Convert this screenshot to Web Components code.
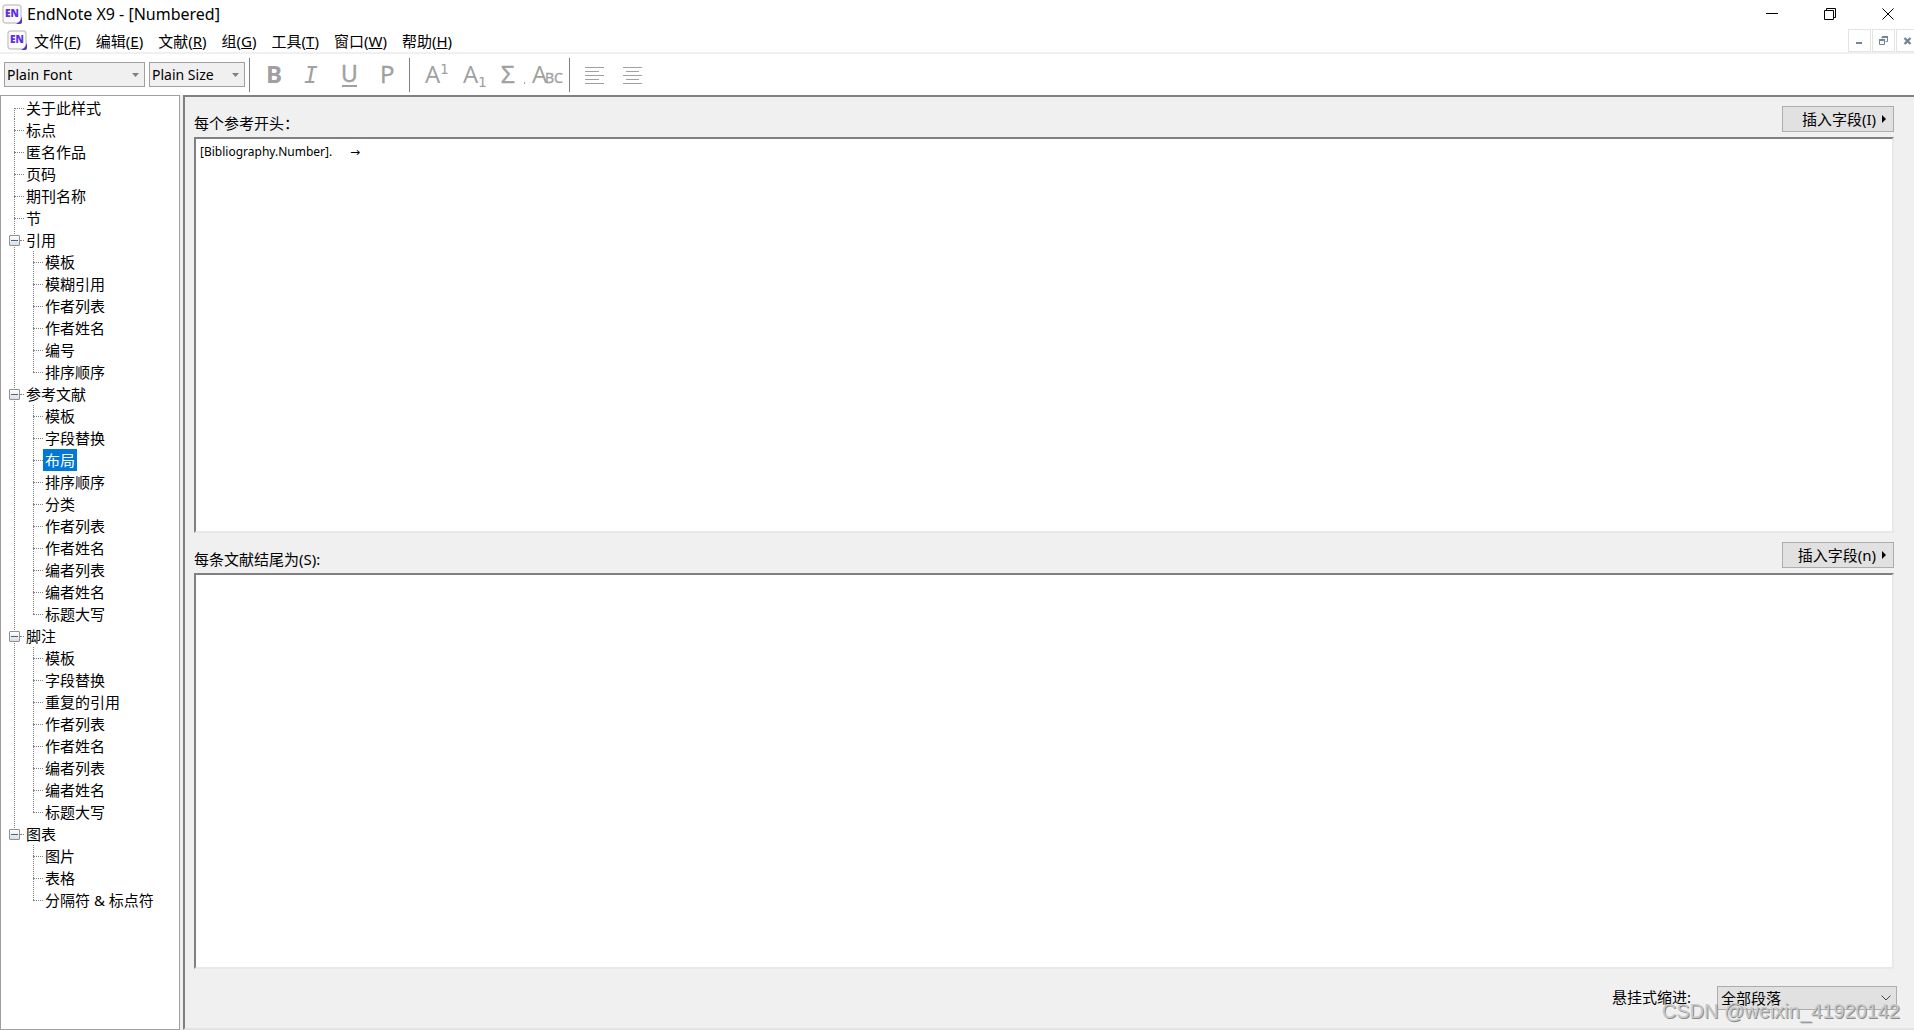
<!DOCTYPE html>
<html lang="zh-CN">
<head>
<meta charset="utf-8">
<title>EndNote X9 - [Numbered]</title>
<style>
  html, body {
    height: 100%;
    margin: 0;
  }
  body {
    font: 15px/22px "Noto Sans", "Noto Sans CJK SC", sans-serif;
    color: #000;
    background: #f0f0f0;
    overflow: hidden;
  }
</style>
</head>
<body>
<endnote-window></endnote-window>

<script>
const define = (name, html, setup) => {
  const template = document.createElement('template');
  template.innerHTML = html;

  customElements.define(name, class extends HTMLElement {
    constructor() {
      super();
      this.attachShadow({ mode: 'open' });
      this.shadowRoot.append(template.content.cloneNode(true));
    }

    connectedCallback() {
      if (setup) setup(this, this.shadowRoot);
    }
  });
};

//Logo used in the title bar and in the menu bar
define('app-logo', `
  <style>
    :host { display: block; width: 20px; height: 20px; }
    svg { display: block; }
  </style>
  <svg width="20" height="20" viewBox="0 0 20 20" aria-hidden="true">
    <rect x="1" y="1" width="18" height="18" rx="3" fill="#fbfbfd" stroke="#c9c9cf" stroke-width="1.4"/>
    <path d="M20 12.500V18a2 2 0 0 1-2 2h-4c3-1.200 5-3.800 6-7.500z" fill="#5a2fc2"/>
    <text x="10" y="13" text-anchor="middle" font-family="Open Sans" font-weight="800" font-size="10" fill="#5b30e6">EN</text>
  </svg>
`);

define('title-bar', `
  <style>
    :host { display: flex; align-items: center; height: 28px; padding: 0 20px 0 2px; gap: 5px; background: #fff; }
    h1 { flex: 1; margin: 0; font-size: 16px; line-height: 28px; font-weight: normal; }
    .controls { display: flex; gap: 46px; }
    button { width: 12px; height: 12px; padding: 0; border: 0; background: none; }
    svg { display: block; fill: none; stroke: #000; }
  </style>
  <app-logo></app-logo>
  <h1><slot></slot></h1>
  <div class="controls">
    <button aria-label="最小化"><svg width="12" height="12"><path d="M0 5.500h12"/></svg></button>
    <button aria-label="还原"><svg width="12" height="12"><path d="M.5 2.500h9v9h-9zM2.500 2.500v-2h9v9h-2"/></svg></button>
    <button aria-label="关闭"><svg width="12" height="12"><path d="M.5.5l11 11M11.500.5l-11 11"/></svg></button>
  </div>
`);

define('menu-bar', `
  <style>
    :host { display: flex; align-items: center; height: 24px; padding-left: 7px; background: #fff; border-bottom: 2px solid #f0f0f0; overflow: hidden; }
    nav { flex: 1; display: flex; gap: 15px; padding: 2px 0 0 7px; }
    .mdi { display: flex; gap: 1px; margin-right: -5px; }
    .mdi button { display: grid; place-items: center; width: 23px; height: 23px; padding: 0; border: 1px solid #e3e3e3; background: #fff; }
    svg { display: block; fill: none; stroke: #74859a; }
  </style>
  <app-logo></app-logo>
  <nav><slot></slot></nav>
  <div class="mdi">
    <button aria-label="最小化文档"><svg width="9" height="9"><path d="M1 7h6" stroke-width="2"/></svg></button>
    <button aria-label="还原文档"><svg width="9" height="9"><path d="M.5 4v4.500h5V4M3 2.500V1h5.500v4.500H6.500"/><path d="M0 4h6M3 1h6" stroke-width="2"/></svg></button>
    <button aria-label="关闭文档"><svg width="9" height="9"><path d="M1.500 2l6 6M7.500 2l-6 6" stroke-width="2.400"/></svg></button>
  </div>
`);

define('menu-item', `
  <style>
    :host { display: block; }
    button { padding: 0; border: 0; background: none; font: inherit; line-height: 22px; color: inherit; white-space: nowrap; }
  </style>
  <button><slot></slot></button>
`);

//Drop-down with its own arrow; the variant decides the arrow and the colours
define('drop-down', `
  <style>
    :host { display: grid; grid-template-columns: 1fr; align-items: center; }
    select, svg { grid-area: 1 / 1; }
    select {
      appearance: none; width: 100%; height: 25px; margin: 0; padding: 0 2px;
      border: 1px solid #a0a0a0; border-radius: 0; background: #f0f0f0; color: #000; font: inherit;
    }
    svg { justify-self: end; margin-right: 6px; pointer-events: none; }
    .chevron { display: none; }
    :host([variant="form"]) select { height: 24px; background: #e1e1e1; border-color: #adadad; padding: 0 3px 2px; }
    :host([variant="form"]) .chevron { display: block; }
    :host([variant="form"]) .arrow { display: none; }
  </style>
  <select></select>
  <svg class="arrow" width="7" height="4"><path d="M0 0h7L3.500 4z" fill="#808080"/></svg>
  <svg class="chevron" width="10" height="6"><path d="M.5.5L5 5 9.500.5" fill="none" stroke="#444"/></svg>
`, (host, root) => {
  const select = root.querySelector('select');
  select.setAttribute('aria-label', host.getAttribute('label'));
  select.innerHTML = `<option>${host.getAttribute('value')}</option>`;
});

define('format-bar', `
  <style>
    :host { display: flex; align-items: center; height: 41px; padding-left: 4px; background: #fff; }
    drop-down { font-size: 14px; }
    .font { width: 141px; margin-right: 4px; }
    .size { width: 96px; margin-right: 2px; }
    .group { display: flex; margin-left: 2px; padding-left: 5px; border-left: 1px solid #808080; height: 34px; }
    button { width: 38px; height: 34px; padding: 0; border: 0; background: none; }
    svg { display: block; fill: #a0a0a0; font-family: "Open Sans"; }
    .lines { fill: none; stroke: #a0a0a0; }
    .mono { font-family: "DejaVu Sans Mono"; }
  </style>
  <drop-down class="font" label="字体" value="Plain Font"></drop-down>
  <drop-down class="size" label="字号" value="Plain Size"></drop-down>
  <div class="group">
    <button aria-label="粗体"><svg width="38" height="34"><text x="11" y="25" font-size="24" font-weight="700">B</text></svg></button>
    <button aria-label="斜体"><svg width="38" height="34"><text class="mono" x="11" y="25" font-size="23" font-style="italic">I</text></svg></button>
    <button aria-label="下划线"><svg width="38" height="34"><text x="10" y="24" font-size="23" stroke="#a0a0a0" stroke-width=".5">U</text><path d="M11 27h15v2H11z"/></svg></button>
    <button aria-label="普通"><svg width="38" height="34"><text x="11" y="25" font-size="24" stroke="#a0a0a0" stroke-width=".4">P</text></svg></button>
  </div>
  <div class="group">
    <button aria-label="上标"><svg width="38" height="34"><text x="10" y="25" font-size="24">A</text><text class="mono" x="25" y="16" font-size="14">1</text></svg></button>
    <button aria-label="下标"><svg width="38" height="34"><text x="10" y="25" font-size="24">A</text><text class="mono" x="25" y="29" font-size="14">1</text></svg></button>
    <button aria-label="符号"><svg width="38" height="34"><text x="10" y="25" font-size="24" stroke="#a0a0a0" stroke-width=".5">Σ</text><path d="M33 24h1v2h-1z"/></svg></button>
    <button aria-label="小型大写"><svg width="38" height="34"><text x="3" y="25" font-size="24">A</text><text x="16" y="25" font-size="14" stroke="#a0a0a0" stroke-width=".4">BC</text></svg></button>
  </div>
  <div class="group">
    <button aria-label="左对齐"><svg class="lines" width="38" height="34"><path d="M10 9.500h19M10 13.500h14M10 17.500h19M10 21.500h14M10 25.500h19"/></svg></button>
    <button aria-label="居中"><svg class="lines" width="38" height="34"><path d="M10 9.500h19M13 13.500h13M10 17.500h19M13 21.500h13M10 25.500h19"/></svg></button>
  </div>
`);

//One row of the tree; nested nodes go into the slot
define('tree-node', `
  <style>
    :host {
      display: block;
      background: repeating-linear-gradient(#808080 0 1px, transparent 1px 2px) 13px 0 / 1px 100% no-repeat;
    }
    :host([start]) { background-position: 13px 11px; }
    :host(:last-child) { background-size: 1px 12px; }
    .row { display: flex; align-items: center; height: 22px; padding-left: 13px; }
    .branch { width: 10px; border-top: 1px dotted #808080; }
    .label { padding: 0 2px; border: 0; background: none; font: inherit; line-height: 22px; color: inherit; white-space: nowrap; }
    .toggle { display: none; width: 11px; height: 11px; padding: 0; border: 1px solid #919191; border-radius: 1px; background: linear-gradient(#fff, #ddd); }
    .toggle svg { display: block; }
    .children { padding-left: 19px; }
    :host([group]) .row { padding-left: 8px; }
    :host([group]) .toggle { display: block; }
    :host([group]) .branch { width: 4px; }
    :host([selected]) .label { background: #0078d7; color: #fff; }
  </style>
  <div class="row">
    <button class="toggle" aria-label="折叠"><svg width="9" height="9"><path d="M1 4.500h7" stroke="#4060a8"/></svg></button>
    <span class="branch"></span>
    <button class="label"></button>
  </div>
  <div class="children"><slot></slot></div>
`, (host, root) => {
  root.querySelector('.label').textContent = host.getAttribute('label');
});

const outline = [
  ['关于此样式'], ['标点'], ['匿名作品'], ['页码'], ['期刊名称'], ['节'],
  ['引用', ['模板', '模糊引用', '作者列表', '作者姓名', '编号', '排序顺序']],
  ['参考文献', ['模板', '字段替换', '布局', '排序顺序', '分类', '作者列表', '作者姓名', '编者列表', '编者姓名', '标题大写']],
  ['脚注', ['模板', '字段替换', '重复的引用', '作者列表', '作者姓名', '编者列表', '编者姓名', '标题大写']],
  ['图表', ['图片', '表格', '分隔符 & 标点符']]
];

define('style-tree', `
  <style>
    :host { display: block; box-sizing: border-box; border: 1px solid #a0a0a0; background: #fff; padding-top: 1px; overflow: hidden; }
  </style>
  <nav aria-label="样式"></nav>
`, (host, root) => {
  const addNode = (parent, label) => {
    const node = document.createElement('tree-node');
    node.setAttribute('label', label);
    if (label === '布局') node.setAttribute('selected', '');
    parent.append(node);
    return node;
  };

  const nav = root.querySelector('nav');
  outline.forEach(([label, children], i) => {
    const node = addNode(nav, label);
    if (i === 0) node.setAttribute('start', '');
    if (children) {
      node.setAttribute('group', '');
      children.forEach((child) => addNode(node, child));
    }
  });
});

//Text field with its caption and the insert button above it
define('field-editor', `
  <style>
    :host { flex: 1; display: flex; flex-direction: column; }
    .head { display: flex; align-items: flex-start; justify-content: space-between; height: 31px; padding-top: 9px; }
    label { padding-top: 6px; }
    button {
      display: flex; align-items: center; justify-content: flex-end; gap: 6px; width: 112px; height: 26px;
      padding: 0 7px 1px 0; border: 1px solid #adadad; background: #e1e1e1; font: inherit; color: inherit;
    }
    textarea {
      flex: 1; display: block; box-sizing: border-box; width: 100%; margin: 0; padding: 2px 4px; resize: none; outline: 0;
      border: 2px solid; border-color: #808080 #e8e8e8 #e8e8e8 #808080; border-radius: 0; background: #fff;
      font: 12px/22px "Noto Sans", "DejaVu Sans", sans-serif; color: #000; tab-size: 150px;
    }
  </style>
  <div class="head">
    <label for="text"><slot></slot></label>
    <button><span></span><svg width="4" height="8"><path d="M0 0l4 4-4 4z"/></svg></button>
  </div>
  <textarea id="text" spellcheck="false"></textarea>
`, (host, root) => {
  root.querySelector('span').textContent = host.getAttribute('action');
  const text = root.querySelector('textarea');
  text.value = host.getAttribute('value') || '';
  text.setAttribute('aria-label', host.textContent);
});

define('layout-panel', `
  <style>
    :host {
      display: flex; flex-direction: column; box-sizing: border-box; padding: 0 20px 0 9px;
      border: 2px solid; border-color: #808080 transparent #e3e3e3 #808080; border-right: 0; background: #f0f0f0;
    }
    footer { display: flex; justify-content: flex-end; align-items: flex-start; gap: 26px; height: 42px; padding-top: 17px; margin-right: -3px; }
    drop-down { width: 180px; }
  </style>
  <field-editor action="插入字段(I)" value="[Bibliography.Number].&#9;→">每个参考开头：</field-editor>
  <field-editor action="插入字段(n)">每条文献结尾为(S):</field-editor>
  <footer>
    <span>悬挂式缩进:</span>
    <drop-down variant="form" label="悬挂式缩进" value="全部段落"></drop-down>
  </footer>
`);

define('endnote-window', `
  <style>
    :host { display: flex; flex-direction: column; height: 100vh; }
    main { flex: 1; display: grid; grid-template-columns: 180px 1fr; gap: 3px; min-height: 0; }
    .watermark {
      position: absolute; right: 14px; bottom: 7px; font: 20px/24px "Liberation Sans", sans-serif;
      color: #c8c8c8; text-shadow: 1px 1px 0 #8c8c8c; pointer-events: none;
    }
  </style>
  <title-bar>EndNote X9 - [Numbered]</title-bar>
  <menu-bar>
    <menu-item>文件(<u>F</u>)</menu-item>
    <menu-item>编辑(<u>E</u>)</menu-item>
    <menu-item>文献(<u>R</u>)</menu-item>
    <menu-item>组(<u>G</u>)</menu-item>
    <menu-item>工具(<u>T</u>)</menu-item>
    <menu-item>窗口(<u>W</u>)</menu-item>
    <menu-item>帮助(<u>H</u>)</menu-item>
  </menu-bar>
  <format-bar></format-bar>
  <main>
    <style-tree></style-tree>
    <layout-panel></layout-panel>
  </main>
  <div class="watermark">CSDN @weixin_41920142</div>
`);
</script>
</body>
</html>
